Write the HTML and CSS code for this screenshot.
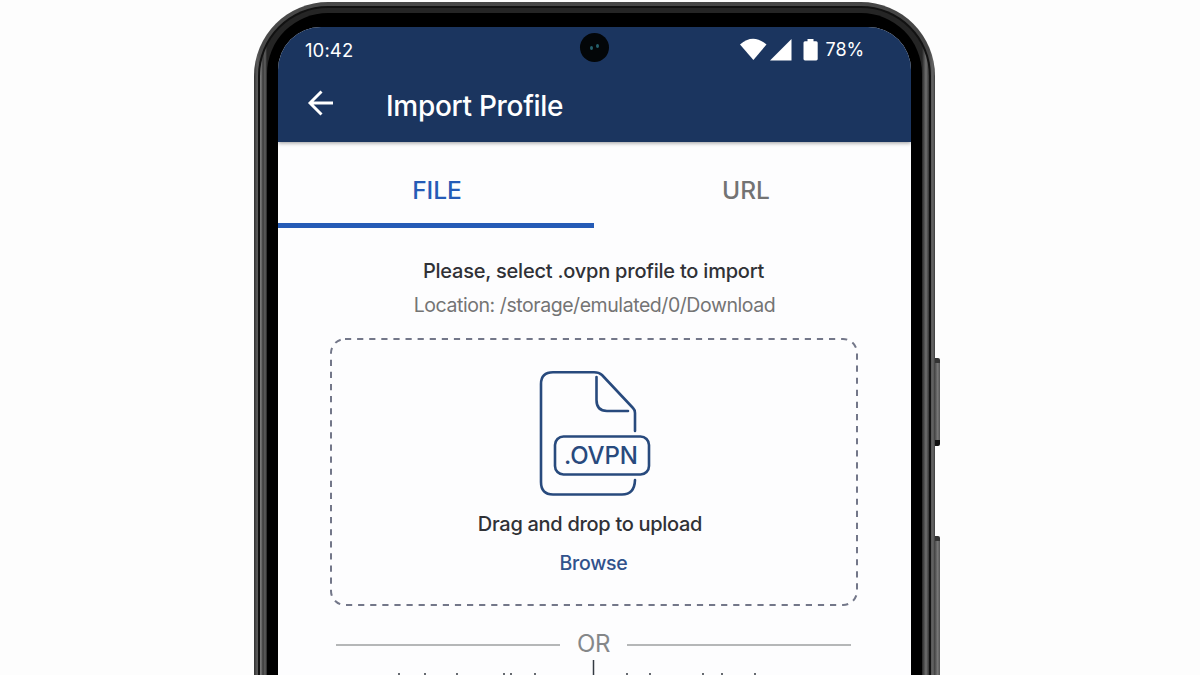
FILE: index.html
```html
<!DOCTYPE html>
<html lang="en">
<head>
<meta charset="utf-8">
<title>Import Profile</title>
<link rel="stylesheet" href="styles.css">
</head>
<body>
<main class="stage">
  <div class="phone">
    <span class="key volume"></span>
    <span class="key power"></span>
    <div class="rim"><div class="groove"><div class="highlight"><div class="bezel"><div class="screen">
      <header class="appbar">
        <div class="status">
          <span class="clock">10:42</span>
          <span class="indicators">
            <svg class="signals" width="79" height="24" viewBox="0 0 79 24" fill="#fff">
              <path d="M0 6.500Q13-5 26.500 6.500L13.400 22Z"/>
              <path d="M30 22.500H51.500V1Z"/>
              <path d="M67.500 1h6v2.200h2.700q1.500 0 1.500 1.500v16.400q0 1.400-1.500 1.400H65q-1.500 0-1.500-1.400V4.700q0-1.500 1.500-1.500h2.500z"/>
            </svg>
            <span class="percent">78%</span>
          </span>
        </div>
        <div class="camera"><i></i><i></i></div>
        <div class="toolbar">
          <svg class="back" width="28" height="28" viewBox="0 0 28 28" fill="none" stroke="#fff" stroke-width="2.900"><path d="M26 14H3M14.500 2.500L3 14l11.500 11.500"/></svg>
          <h1>Import Profile</h1>
        </div>
      </header>
      <nav class="tabs"><a class="tab active"><span>FILE</span></a><a class="tab"><span>URL</span></a></nav>
      <section class="content">
        <p class="prompt">Please, select .ovpn profile to import</p>
        <p class="location">Location: /storage/emulated/0/Download</p>
        <div class="dropzone">
          <svg class="outline" width="530" height="270" viewBox="0 0 530 270" fill="none"><rect x="2" y="2" width="526" height="266" rx="14"/></svg>
          <svg class="file" width="114" height="128" viewBox="0 0 114 128" fill="none">
            <path d="M97 61V43Q97 40 95 38L64 5Q61 2.200 56 2.200H15Q3 2.200 3 14V112Q3 124.500 15 124.500H84Q96.500 124.500 97 110"/>
            <path d="M58.500 7V30Q58.500 41 69 41H90"/>
            <rect x="17" y="66.500" width="94" height="38" rx="8.500"/>
            <text x="26" y="94" textLength="74">.OVPN</text>
          </svg>
          <p class="drag">Drag and drop to upload</p>
          <a class="browse">Browse</a>
        </div>
        <div class="divider"><span>OR</span></div>
        <svg class="cutoff" width="400" height="16" viewBox="0 0 400 16"><path d="M199.500 1V16"/><path d="M5 14v2M31 14v2M63 14v2M110 14v2M117 14v2M141 14v2M233 14v2M256 14v2M309 14v2M328 14v2M361 14v2"/></svg>
      </section>
    </div></div></div></div></div>
  </div>
</main>
</body>
</html>
```
FILE: styles.css
```css
* { box-sizing: border-box; }
body { margin: 0; background: #fdfdfd; font-family: Inter, "Liberation Sans", sans-serif; }
h1, p { margin: 0; }
svg { display: block; }
.stage { height: 675px; overflow: hidden; padding: 2px 0 0 254px; }
.phone { position: relative; width: 681px; height: 760px; }
.rim { position: relative; height: 100%; padding: 4px; border-radius: 74px; background: linear-gradient(90deg, #303030, #5b5b5b 3px, #494949 6px, #454545 675px, #656565 679px, #3b3b3b); }
.groove { height: 100%; padding: 2px; border-radius: 70px; background: #111; }
.highlight { height: 100%; padding: 5px 7px; border-radius: 68px; background: linear-gradient(90deg, #777 1px, #393939 3px, #606060 5px, #252525 7px, #252525 662px, #707070 666px, #353535); }
.bezel { height: 100%; padding: 14px 11px; border-radius: 61px; background: #000; }
.screen { height: 100%; border-radius: 43px; background: #fdfdfe; overflow: hidden; }
.key { position: absolute; left: 680px; width: 6px; border-radius: 0 2px 2px 0; background: linear-gradient(90deg, #3a3a3a, #777 60%, #555); }
.volume { top: 356px; height: 88px; border-top: 5px solid #333; border-bottom: 6px solid #111; }
.power { top: 534px; height: 220px; border-top: 5px solid #333; }
.appbar { position: relative; height: 115px; background: #1b355f; box-shadow: 0 1px 4px #0006; }
.status { display: flex; justify-content: space-between; padding: 11px 47px 0 27px; height: 44px; color: #fff; line-height: 24px; }
.clock { font-size: 18.5px; letter-spacing: .1px; }
.indicators { display: flex; gap: 7px; }
.percent { font-size: 18px; letter-spacing: -.1px; }
.camera { position: absolute; left: 302px; top: 6px; width: 29px; height: 29px; border-radius: 50%; background: #030608; display: flex; align-items: center; justify-content: center; gap: 3px; }
.camera i { width: 3px; height: 4px; border-radius: 50%; background: #25606b; }
.camera i:last-child { margin-bottom: 4px; }
.toolbar { display: flex; align-items: center; gap: 51px; padding-left: 29px; height: 64px; color: #fff; }
.toolbar h1 { font-size: 28px; font-weight: 500; letter-spacing: -.3px; line-height: 34px; padding-top: 5px; }
.tabs { display: flex; height: 86px; }
.tab { width: 316px; padding: 31px 12px 0 0; text-align: center; color: #737373; font-size: 24.5px; line-height: 34px; font-weight: 500; }
.active { padding: 31px 0 0 2px; color: #255bb6; border-bottom: 5px solid #255bb6; }
.content { display: flex; flex-direction: column; align-items: center; padding-right: 2px; }
.prompt { margin-top: 31px; font-size: 20px; letter-spacing: -.22px; line-height: 24px; font-weight: 500; color: #303136; }
.location { margin: 10px 0 0 2px; font-size: 19.5px; letter-spacing: -.44px; line-height: 24px; color: #747474; }
.dropzone { position: relative; width: 530px; height: 270px; margin-top: 20px; display: flex; flex-direction: column; align-items: center; }
.outline { position: absolute; left: 0; top: 0; }
.outline rect { stroke: #737789; stroke-width: 2; stroke-dasharray: 6.200 5.900; }
.file { margin: 33px 0 0 3px; stroke: #284a7d; stroke-width: 2.6; stroke-linecap: round; }
.file text { font: 500 24px Inter, sans-serif; fill: #284a7d; stroke: none; }
.drag { margin: 14px 7px 0 0; font-size: 20px; font-weight: 500; letter-spacing: -.3px; line-height: 24px; color: #303136; }
.browse { margin-top: 15px; font-size: 19.5px; font-weight: 500; letter-spacing: -.25px; line-height: 24px; color: #31528c; }
.divider { display: flex; align-items: center; gap: 17px; width: 515px; margin-top: 21px; color: #858789; font-size: 24px; letter-spacing: -.3px; line-height: 32px; }
.divider::before, .divider::after { content: ""; flex: 1; height: 2px; margin-top: 2px; background: #b5b7b8; }
.cutoff { margin-top: -1px; stroke: #343a42; stroke-width: 1.5; }
```
